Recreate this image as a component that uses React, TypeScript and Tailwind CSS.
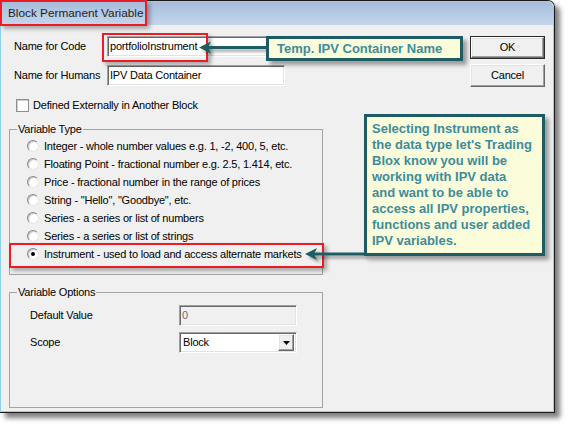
const types = [
  "Integer - whole number values e.g. 1, -2, 400, 5, etc.",
  "Floating Point - fractional number e.g. 2.5, 1.414, etc.",
  "Price - fractional number in the range of prices",
  'String - "Hello", "Goodbye", etc.',
  "Series - a series or list of numbers",
  "Series - a series or list of strings",
  "Instrument - used to load and access alternate markets",
];

const noteLines = [
  "Selecting Instrument as",
  "the data type let's Trading",
  "Blox know you will be",
  "working with IPV data",
  "and want to be able to",
  "access all IPV properties,",
  "functions and user added",
  "IPV variables.",
];

// classic 3D sunken edge used by edit boxes
const sunken =
  "border border-t-[#a0a0a0] border-l-[#a0a0a0] border-r-white border-b-white shadow-[inset_1px_1px_0_#696969,inset_-1px_-1px_0_#e3e3e3]";

const raised =
  "border border-t-white border-l-white border-r-[#696969] border-b-[#696969] shadow-[inset_-1px_-1px_0_#a0a0a0,inset_1px_1px_0_#e3e3e3]";

const Radio = ({ on = false }: { on?: boolean }) => {
  return (
    <span className="w-[12px] h-[12px] shrink-0 rounded-full bg-white border border-t-[#8a8a8a] border-l-[#8a8a8a] border-r-[#e6e6e6] border-b-[#e6e6e6] shadow-[inset_1px_1px_1px_#c4c4c4] flex items-center justify-center">
      {on && <span className="w-[4px] h-[4px] rounded-full bg-black" />}
    </span>
  );
};

const App = () => {
  return (
    <div className="relative w-[569px] h-[427px] overflow-hidden bg-white text-black font-['Liberation_Sans',Arial,sans-serif]">
      {/* dialog window */}
      <div className="w-[555px] h-[413px] border border-l-0 border-[#1a1a1a] rounded-tr-[7px] shadow-[5px_5px_5px_rgba(0,0,0,0.5)]">
        <div className="flex flex-col h-full border border-[#8fd0ec] rounded-tr-[6px] overflow-hidden">
          <div className="h-[23px] shrink-0 flex items-center pl-[7px] bg-gradient-to-b from-[#a6bddb] to-[#c4d6ec] text-[11.8px] text-[#1e1e1e]">
            Block Permanent Variable
          </div>

          <div className="flex flex-1 bg-[#f0f0f0] text-[11px] tracking-[-0.2px] leading-[13px]">
            <div className="w-[322px] pt-[11px]">
              <div className="flex items-center h-[21px] ml-[13px]">
                <span className="w-[93px]">Name for Code</span>
                <div className={`${sunken} w-[178px] h-[21px] bg-white flex items-center pl-[2px]`}>
                  portfolioInstrument
                </div>
              </div>
              <div className="flex items-center h-[21px] ml-[13px] mt-[8px]">
                <span className="w-[93px]">Name for Humans</span>
                <div className={`${sunken} w-[178px] h-[21px] bg-white flex items-center pl-[2px]`}>
                  IPV Data Container
                </div>
              </div>

              <div className="flex items-center h-[13px] ml-[15px] mt-[13px]">
                <span className="w-[13px] h-[13px] bg-white border border-[#8e8e8e] shadow-[inset_1px_1px_0_#cfcfcf]" />
                <span className="ml-[4px]">Defined Externally in Another Block</span>
              </div>

              <fieldset className="m-0 p-0 ml-[8px] mt-[11px] w-[314px] border border-[#a4a4a4] pt-[1px] pb-[11px]">
                <legend className="ml-[7px] px-[1px] p-0 leading-[13px]">Variable Type</legend>
                {types.map((t, i) => (
                  <div key={t} className="flex items-center h-[18px] ml-[17px]">
                    <Radio on={i === types.length - 1} />
                    <span className="ml-[5px] whitespace-nowrap">{t}</span>
                  </div>
                ))}
              </fieldset>

              <fieldset className="m-0 p-0 ml-[8px] mt-[11px] w-[314px] h-[122px] border border-[#a4a4a4]">
                <legend className="ml-[7px] px-[1px] p-0 leading-[13px]">Variable Options</legend>
                <div className="flex items-center h-[21px] ml-[20px] mt-[6px]">
                  <span className="w-[149px]">Default Value</span>
                  <div className={`${sunken} w-[118px] h-[21px] bg-[#f0f0f0] text-[#6d6d6d] flex items-center pl-[2px]`}>
                    0
                  </div>
                </div>
                <div className="flex items-center h-[21px] ml-[20px] mt-[6px]">
                  <span className="w-[149px]">Scope</span>
                  <div className={`${sunken} w-[118px] h-[21px] bg-white flex items-center pl-[3px]`}>
                    <span className="flex-1">Block</span>
                    <span className={`${raised} w-[16px] h-[17px] mr-[2px] bg-[#f0f0f0] flex items-center justify-center`}>
                      <svg width="7" height="4" viewBox="0 0 7 4">
                        <path d="M0 0h7L3.5 4z" fill="#000" />
                      </svg>
                    </span>
                  </div>
                </div>
              </fieldset>
            </div>

            <div className="ml-auto mr-[8px] pt-[11px] flex flex-col gap-[5px]">
              <div className="w-[75px] h-[23px] border border-[#2a2a2a]">
                <button className={`${raised} w-full h-full bg-[#f0f0f0]`}>OK</button>
              </div>
              <button className={`${raised} w-[75px] h-[23px] bg-[#f0f0f0]`}>Cancel</button>
            </div>
          </div>
        </div>
      </div>

      {/* red highlight frames */}
      <div className="absolute left-0 top-0 w-[147px] h-[26px] border-2 border-[#ec1c24] shadow-[3px_3px_4px_rgba(0,0,0,0.3)]" />
      <div className="absolute left-[102px] top-[33px] w-[106px] h-[29px] border-2 border-[#ec1c24] shadow-[3px_3px_4px_rgba(0,0,0,0.3)]" />
      <div className="absolute left-[9px] top-[243px] w-[315px] h-[25px] border-2 border-[#ec1c24] shadow-[3px_3px_4px_rgba(0,0,0,0.3)]" />

      {/* pointer arrows */}
      <svg className="absolute left-0 top-0" width="569" height="427">
        <defs>
          <filter id="arrowShadow" x="-20%" y="-100%" width="140%" height="300%">
            <feDropShadow dx="3" dy="3" stdDeviation="1.5" floodColor="#000" floodOpacity="0.35" />
          </filter>
        </defs>
        <g filter="url(#arrowShadow)" fill="#1e5c63" stroke="#1e5c63">
          <line x1="208" y1="47.5" x2="268" y2="47.5" strokeWidth="3" />
          <path d="M199 47.5L211 41.5L208 47.5L211 53.5Z" stroke="none" />
          <line x1="314" y1="254" x2="366" y2="254" strokeWidth="3" />
          <path d="M305 254L317 248L314 254L317 260Z" stroke="none" />
        </g>
      </svg>

      {/* callouts */}
      <div className="absolute left-[266px] top-[36px] w-[197px] h-[25px] border-[3px] border-[#1e5c63] bg-[#fbfcd9] shadow-[4px_4px_4px_rgba(0,0,0,0.35)] flex items-center pl-[8px] text-[13px] font-bold text-[#3d8c9c] whitespace-nowrap">
        Temp. IPV Container Name
      </div>
      <div className="absolute left-[364px] top-[114px] w-[181px] h-[142px] border-[3px] border-[#1e5c63] bg-[#fbfcd9] shadow-[4px_4px_4px_rgba(0,0,0,0.35)] pl-[5px] pt-[4px] text-[13px] leading-[16px] font-bold text-[#3d8c9c]">
        {noteLines.map((l) => (
          <div key={l} className="whitespace-nowrap">
            {l}
          </div>
        ))}
      </div>
    </div>
  );
};

export default App;
